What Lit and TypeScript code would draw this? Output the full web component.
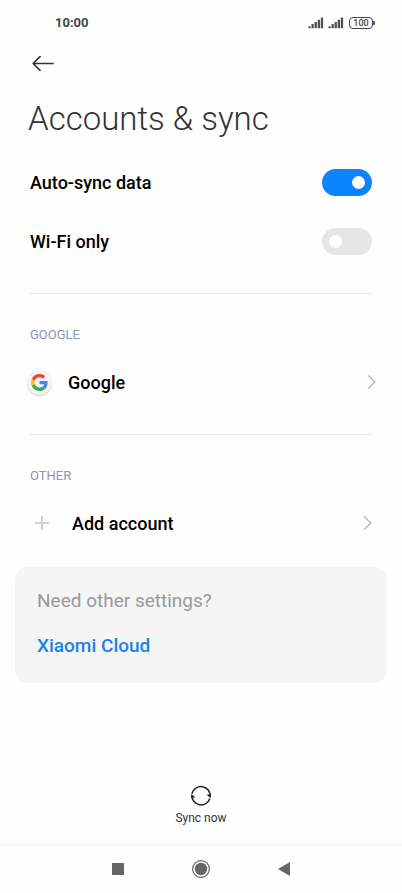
import { LitElement, html, css, svg } from "lit";
import { customElement, state } from "lit/decorators.js";

const signal = html`<svg width="16" height="12" viewBox="0 0 16 12" aria-hidden="true">
  ${[0, 1, 2, 3, 4].map(
    (i) => svg`<rect x=${0.4 + i * 3.1} y=${9.3 - i * 2.2} width="2.3" height=${2 + i * 2.2} rx="0.5" fill="#505050"/>`
  )}
</svg>`;

const chevron = html`<svg width="9" height="16" viewBox="0 0 9 16" fill="none" stroke="#b8b8b8" stroke-width="1.4" aria-hidden="true">
  <path d="M1 1.2 L7.8 8 L1 14.8" />
</svg>`;

const googleLogo = html`<svg width="17" height="17" viewBox="0 0 48 48" aria-hidden="true">
  <path fill="#EA4335" d="M24 9.5c3.54 0 6.71 1.22 9.21 3.6l6.85-6.85C35.9 2.38 30.47 0 24 0 14.62 0 6.51 5.38 2.56 13.22l7.98 6.19C12.43 13.72 17.74 9.5 24 9.5z" />
  <path fill="#4285F4" d="M46.98 24.55c0-1.57-.15-3.09-.38-4.55H24v9.02h12.94c-.58 2.96-2.26 5.48-4.78 7.18l7.73 6c4.51-4.18 7.09-10.36 7.09-17.65z" />
  <path fill="#FBBC05" d="M10.53 28.59c-.48-1.45-.76-2.99-.76-4.59s.27-3.14.76-4.59l-7.98-6.19C.92 16.46 0 20.12 0 24c0 3.88.92 7.54 2.56 10.78l7.97-6.19z" />
  <path fill="#34A853" d="M24 48c6.48 0 11.93-2.13 15.89-5.81l-7.73-6c-2.15 1.45-4.92 2.3-8.16 2.3-6.26 0-11.57-4.22-13.47-9.91l-7.98 6.19C6.51 42.62 14.62 48 24 48z" />
</svg>`;

@customElement("app-root")
export class AppRoot extends LitElement {
  @state() private autoSync = true;
  @state() private wifiOnly = false;

  static styles = css`
    :host {
      display: flex;
      flex-direction: column;
      min-height: 100vh;
      background: #fefefe;
      color: #000;
      font-family: Roboto, "Noto Sans", sans-serif;
    }
    * {
      box-sizing: border-box;
    }
    svg {
      display: block;
      flex: none;
    }
    button {
      appearance: none;
      border: 0;
      margin: 0;
      padding: 0;
      background: none;
      color: inherit;
      font: inherit;
      cursor: pointer;
    }
    .status {
      display: flex;
      align-items: center;
      justify-content: space-between;
      height: 45px;
      padding: 0 27px 0 55px;
      font-size: 13px;
      font-weight: 700;
      color: #444;
    }
    .indicators {
      display: flex;
      align-items: center;
      gap: 4px;
    }
    .battery {
      display: flex;
      align-items: center;
      margin-left: 1px;
    }
    .level {
      width: 24px;
      height: 12px;
      border: 1px solid #444;
      border-radius: 4px;
      font-size: 9px;
      line-height: 10px;
      font-weight: 500;
      text-align: center;
    }
    .tip {
      width: 2px;
      height: 4px;
      border-radius: 0 1px 1px 0;
      background: #5a5a5a;
    }
    .back {
      display: flex;
      align-items: center;
      width: 36px;
      height: 36px;
      margin-left: 32px;
    }
    h1 {
      margin: 14px 28px 10px;
      font-size: 33px;
      line-height: 48px;
      font-weight: 300;
      color: #333;
    }
    .setting {
      display: flex;
      align-items: center;
      justify-content: space-between;
      height: 59px;
      padding: 0 30px;
      font-size: 18px;
      font-weight: 500;
    }
    .switch {
      appearance: none;
      display: flex;
      align-items: center;
      width: 50px;
      height: 27px;
      margin: 0;
      padding: 0 7px;
      border-radius: 14px;
      background: #e6e6e6;
      cursor: pointer;
    }
    .switch::before {
      content: "";
      width: 13px;
      height: 13px;
      border-radius: 50%;
      background: #fff;
    }
    .switch:checked {
      justify-content: flex-end;
      background: #0d84ff;
    }
    hr {
      height: 1px;
      margin: 22px 30px 31px;
      border: 0;
      background: #e8e8e8;
    }
    h2 {
      margin: 0 30px 7px;
      font-size: 13px;
      line-height: 20px;
      font-weight: 400;
      color: #9295b0;
    }
    .entry {
      display: flex;
      align-items: center;
      width: 100%;
      height: 60px;
      padding: 0 30px;
      gap: 18px;
      font-size: 18px;
      font-weight: 500;
      text-align: left;
    }
    .entry.account {
      padding: 0 26px 0 27px;
      gap: 16px;
    }
    .name {
      flex: 1;
    }
    .badge {
      display: flex;
      align-items: center;
      justify-content: center;
      width: 25px;
      height: 25px;
      border-radius: 50%;
      background: #f4f4f4;
      box-shadow: 0 1px 1px #ccc;
    }
    .plus {
      display: flex;
      justify-content: center;
      width: 24px;
    }
    .more {
      display: flex;
      flex-direction: column;
      align-items: flex-start;
      gap: 21px;
      margin: 14px 15px 0;
      padding: 22px 22px 25px;
      border-radius: 13px;
      background: #f5f5f5;
      font-size: 19px;
      line-height: 24px;
    }
    .more p {
      margin: 0;
      color: #999;
    }
    .more a {
      color: #1a82e8;
      font-weight: 500;
      text-decoration: none;
    }
    .sync {
      display: flex;
      flex-direction: column;
      align-items: center;
      gap: 3px;
      margin: auto auto 18px;
      font-size: 12px;
      line-height: 16px;
      color: #333;
    }
    nav {
      display: flex;
      align-items: center;
      justify-content: center;
      gap: 59px;
      height: 49px;
      border-top: 1px solid #eee;
    }
    nav button {
      display: flex;
      align-items: center;
      justify-content: center;
      width: 24px;
      height: 24px;
    }
  `;

  render() {
    return html`
      <div class="status">
        <span>10:00</span>
        <div class="indicators">
          ${signal}${signal}
          <div class="battery"><span class="level">100</span><span class="tip"></span></div>
        </div>
      </div>
      <header>
        <button class="back" aria-label="Back">
          <svg width="22" height="16" viewBox="0 0 22 16" fill="none" stroke="#333" stroke-width="1.7" stroke-linecap="round" stroke-linejoin="round">
            <path d="M21 8.5 H1.5 M8 1.7 L1.2 8.5 L8 15.3" />
          </svg>
        </button>
        <h1>Accounts &amp; sync</h1>
      </header>
      <main>
        <label class="setting">
          Auto-sync data
          <input class="switch" type="checkbox" .checked=${this.autoSync}
            @change=${(e: Event) => (this.autoSync = (e.target as HTMLInputElement).checked)} />
        </label>
        <label class="setting">
          Wi-Fi only
          <input class="switch" type="checkbox" .checked=${this.wifiOnly}
            @change=${(e: Event) => (this.wifiOnly = (e.target as HTMLInputElement).checked)} />
        </label>
        <hr />
        <h2>GOOGLE</h2>
        <button class="entry account">
          <span class="badge">${googleLogo}</span>
          <span class="name">Google</span>
          ${chevron}
        </button>
        <hr />
        <h2>OTHER</h2>
        <button class="entry">
          <span class="plus">
            <svg width="14" height="14" viewBox="0 0 14 14" stroke="#d0d0d0" stroke-width="2" aria-hidden="true">
              <path d="M7 0 V14 M0 7 H14" />
            </svg>
          </span>
          <span class="name">Add account</span>
          ${chevron}
        </button>
        <section class="more">
          <p>Need other settings?</p>
          <a href="#cloud">Xiaomi Cloud</a>
        </section>
      </main>
      <button class="sync">
        <svg width="22" height="22" viewBox="0 0 22 22" fill="none" stroke="#222" stroke-width="1.5" aria-hidden="true">
          <path d="M1.9 8.8 A9.3 9.3 0 0 1 20.2 12 M19.9 13.6 A9.3 9.3 0 0 1 1.8 10.4" />
          <path d="M16.6 9.8 L21 9 L20.7 13 Z M5.4 12.2 L1 13 L1.3 9 Z" fill="#222" stroke="none" />
        </svg>
        Sync now
      </button>
      <nav aria-label="System navigation">
        <button aria-label="Recent apps">
          <svg width="12" height="12" viewBox="0 0 12 12"><rect width="12" height="12" rx="0.5" fill="#666" /></svg>
        </button>
        <button aria-label="Home">
          <svg width="18" height="18" viewBox="0 0 18 18">
            <circle cx="9" cy="9" r="8.4" fill="none" stroke="#666" stroke-width="1.2" />
            <circle cx="9" cy="9" r="6.2" fill="#666" />
          </svg>
        </button>
        <button aria-label="Back to previous screen">
          <svg width="12" height="14" viewBox="0 0 12 14"><path d="M0 7 L12 0 V14 Z" fill="#666" /></svg>
        </button>
      </nav>
    `;
  }
}
